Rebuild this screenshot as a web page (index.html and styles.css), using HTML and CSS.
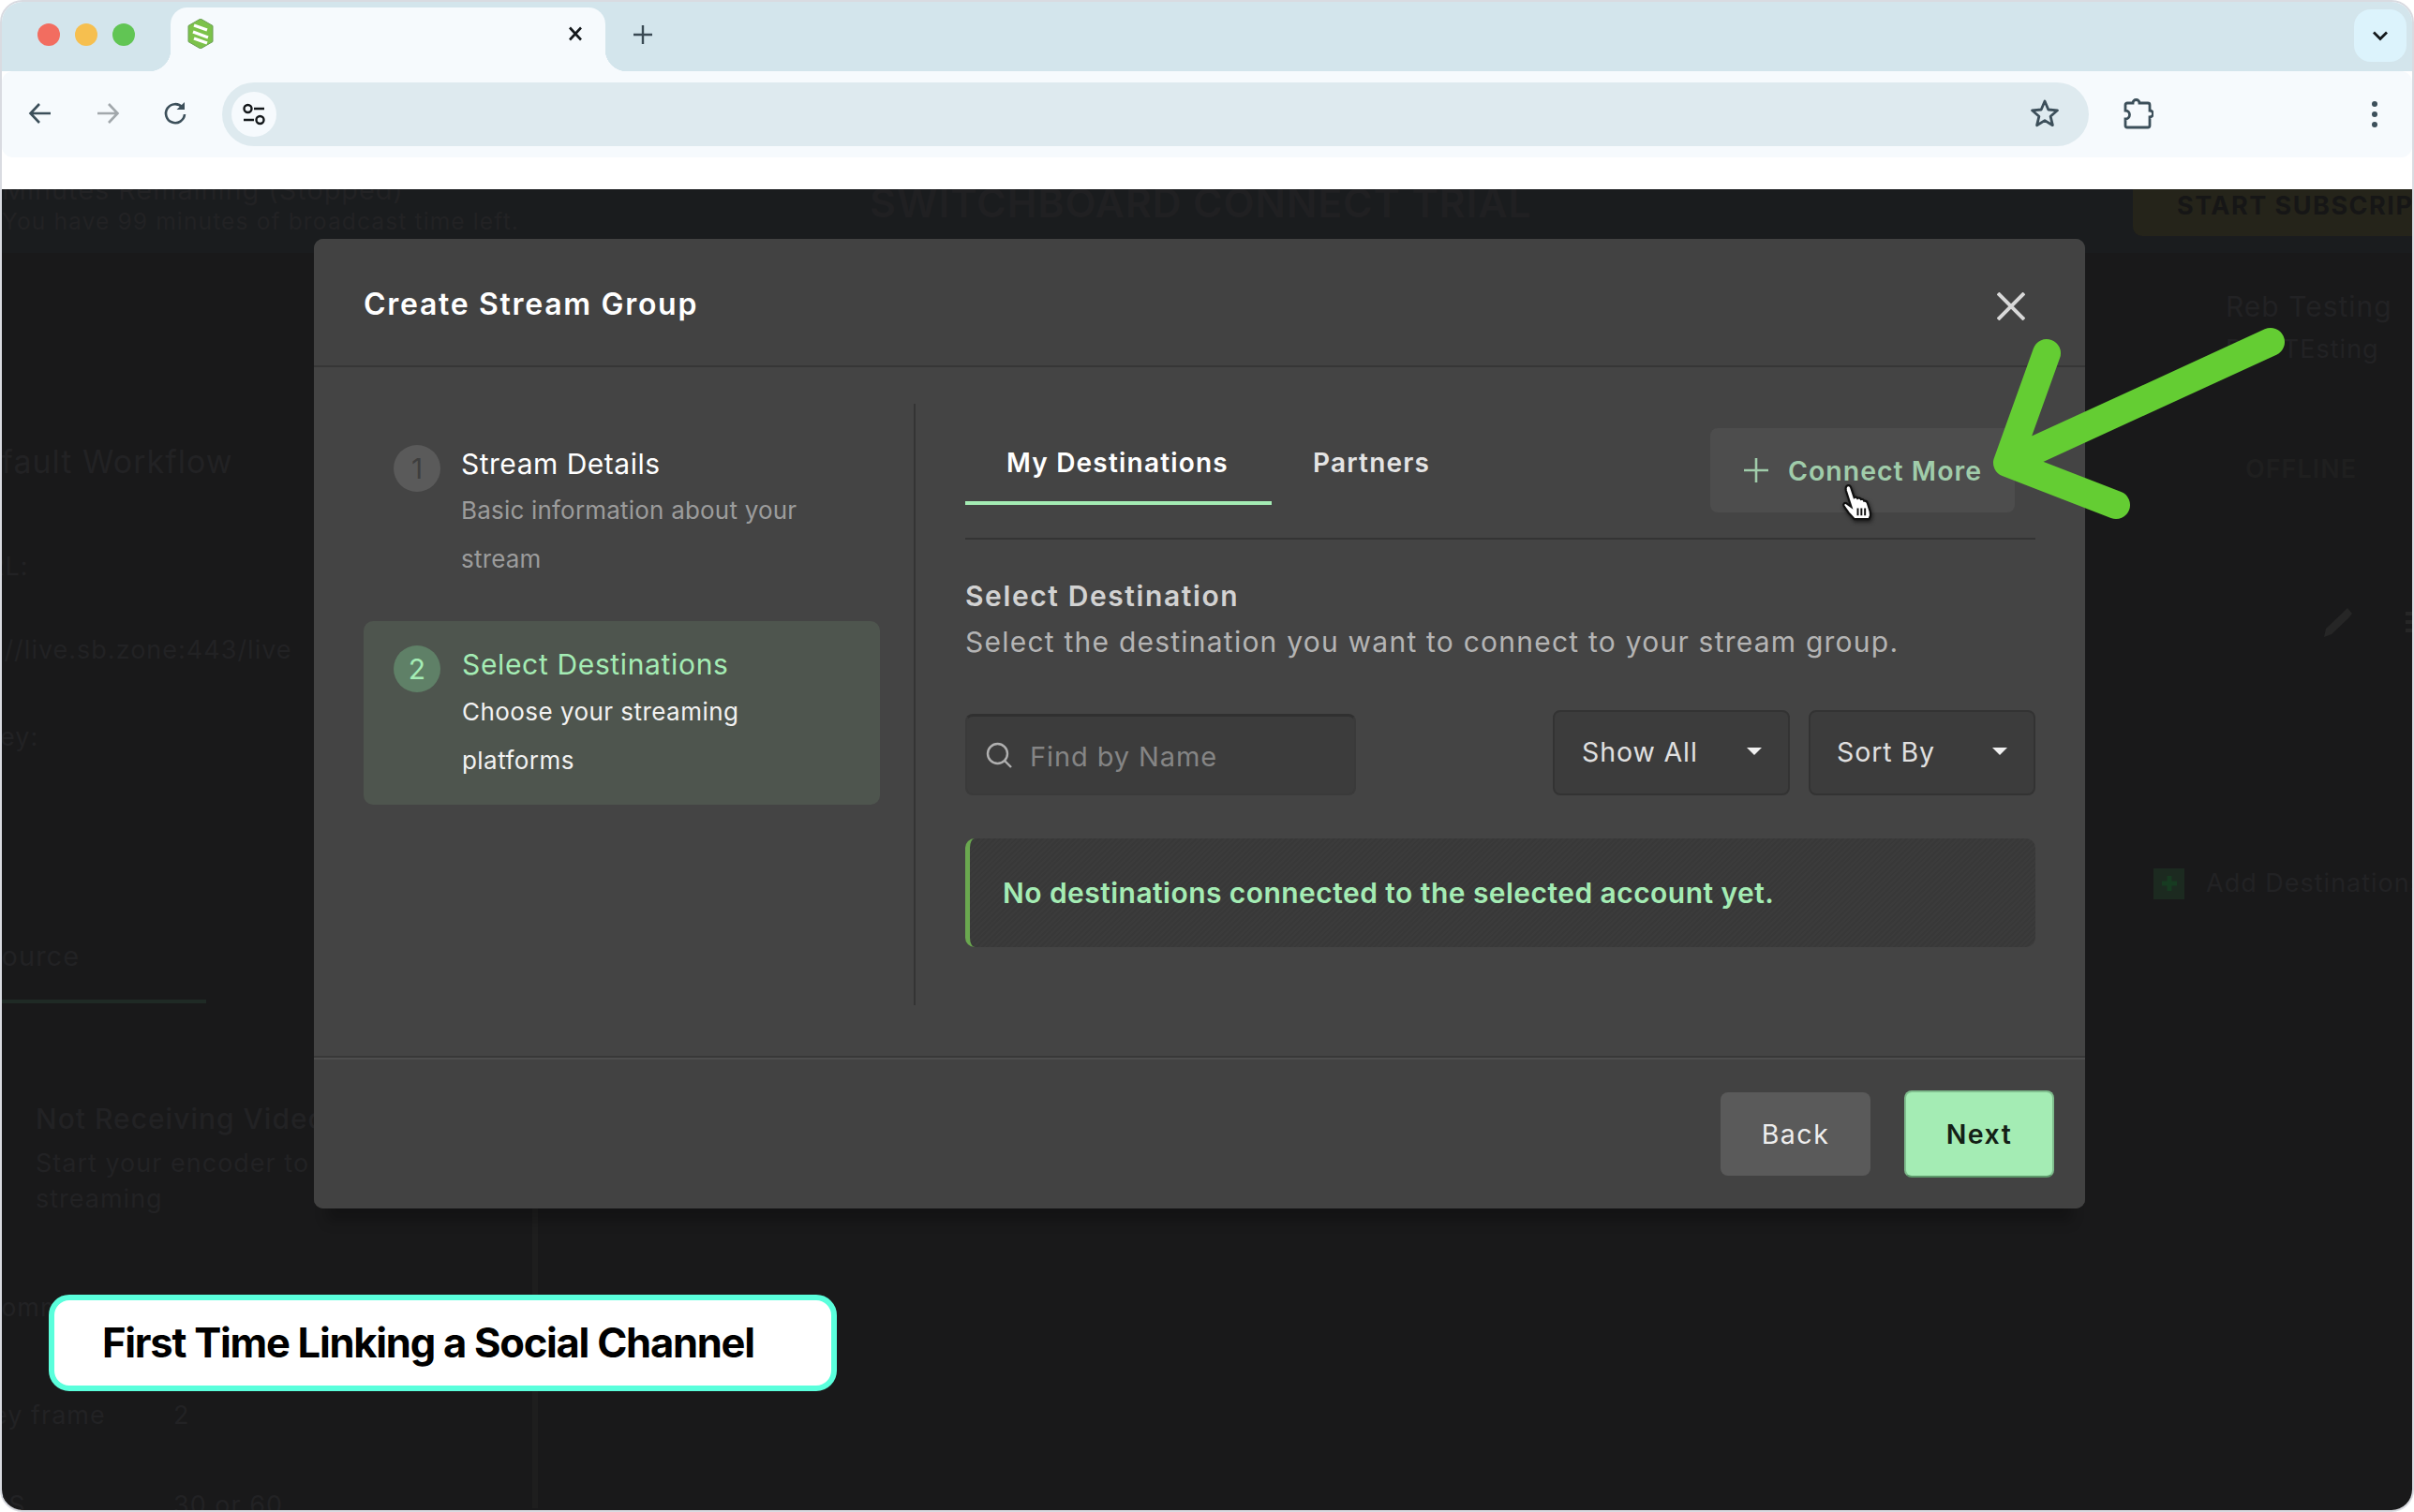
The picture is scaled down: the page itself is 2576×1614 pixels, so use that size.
FILE: index.html
```html
<!DOCTYPE html>
<html>
<head>
    <title>Create Stream Group</title>
    <link rel="stylesheet" href="styles.css">
</head>
<body>
<div class="window">
    <div class="tabstrip">
        <div class="lights">
            <span class="light red"></span>
            <span class="light yellow"></span>
            <span class="light green"></span>
        </div>
        <div class="tab">
            <svg class="favicon" viewBox="0 0 28 32">
                <path d="M14 0 27 7.500V24.500L14 32 1 24.500V7.500z" fill="#7cc24a" stroke="#6a9e55"/>
                <path d="M7 7 21 12M6 14 22 20M7 21 21 26" stroke="#fff" stroke-width="3.400" fill="none"/>
            </svg>
            <svg class="tab-close" viewBox="0 0 18 18"><path d="M3 2.500 15 15.500M15 2.500 3 15.500" stroke="#14181b" stroke-width="2.600" fill="none"/></svg>
        </div>
        <svg class="new-tab" viewBox="0 0 22 22"><path d="M11 1V21M1 11H21" stroke="#3a4a54" stroke-width="2.400" fill="none"/></svg>
        <div class="tab-search">
            <svg viewBox="0 0 18 12" width="18" height="12"><path d="M2 2.500 9 9.500 16 2.500" stroke="#14181b" stroke-width="2.800" fill="none"/></svg>
        </div>
    </div>
    <div class="toolbar">
        <svg class="nav-icon" viewBox="0 0 26 26"><path d="M24 13H3M12 3 2.500 13 12 23" stroke="#3c4f5a" stroke-width="2.600" fill="none"/></svg>
        <svg class="nav-icon" viewBox="0 0 26 26"><path d="M2 13H23M14 3 23.500 13 14 23" stroke="#a2a8ac" stroke-width="2.600" fill="none"/></svg>
        <svg class="nav-icon" viewBox="0 0 26 26"><path d="M20.500 6.500A10 10 0 1 0 23 14" stroke="#3c4f5a" stroke-width="2.600" fill="none"/><path d="M14.500 9H23V1z" fill="#3c4f5a"/></svg>
        <div class="omnibox">
            <div class="site-chip">
                <svg viewBox="0 0 26 26" width="26" height="26"><circle cx="6.500" cy="7" r="4" stroke="#14181b" stroke-width="2.400" fill="none"/><path d="M13 7H24M2 19H13" stroke="#14181b" stroke-width="2.600"/><circle cx="19.500" cy="19" r="4" stroke="#14181b" stroke-width="2.400" fill="none"/></svg>
            </div>
            <svg class="star" viewBox="0 0 32 32"><path d="M16 3 19.800 12 29.500 12.800 22.100 19.200 24.400 28.700 16 23.600 7.600 28.700 9.900 19.200 2.500 12.800 12.200 12z" stroke="#3c4f5a" stroke-width="2.800" fill="none" stroke-linejoin="round"/></svg>
        </div>
        <svg class="puzzle" viewBox="0 0 32 34"><path d="M4 6H10A3.500 3.500 0 0 1 17 6H26A2 2 0 0 1 28 8V14A3.500 3.500 0 0 1 28 21V30A2 2 0 0 1 26 32H4A2 2 0 0 1 2 30V23A4.500 4.500 0 0 0 2 14V8A2 2 0 0 1 4 6Z" stroke="#3c4f5a" stroke-width="2.800" fill="none"/></svg>
        <div class="kebab"><span></span><span></span><span></span></div>
    </div>
    <div class="toolbar-gap"></div>

    <div class="page">
        <div class="topbar">
            <div class="trial-info">
                <div class="trial-title">Minutes Remaining (Stopped)</div>
                <div class="trial-left">You have 99 minutes of broadcast time left.</div>
            </div>
            <div class="trial-name">SWITCHBOARD CONNECT TRIAL</div>
            <div class="subscribe">START SUBSCRIPTION</div>
        </div>
        <div class="page-main">
            <div class="left-col">
                <div class="ghost-row workflow">Default Workflow</div>
                <div class="ghost-row url-label">URL:</div>
                <div class="ghost-row url-value">rtmp://live.sb.zone:443/live</div>
                <div class="ghost-row key-label">Key:</div>
                <div class="ghost-row source-tab">Source</div>
                <div class="source-line"></div>
                <div class="ghost-row receive-title">Not Receiving Video</div>
                <div class="ghost-row receive-text">Start your encoder to begin</div>
                <div class="ghost-row receive-text2">streaming</div>
                <div class="ghost-row recommend">Recommended</div>
                <div class="ghost-row spec keyframe"><span class="spec-label">Key frame</span><span>2</span></div>
                <div class="ghost-row spec fps"><span class="spec-label">FPS</span><span>30 or 60</span></div>
            </div>
            <div class="right-col">
                <div class="ghost-row reb-name">Reb Testing</div>
                <div class="ghost-row reb-sub">Reb TEsting</div>
                <div class="ghost-row offline">OFFLINE</div>
                <div class="ghost-row edit-row">
                    <svg class="pencil" viewBox="0 0 32 33"><path d="M1 32 3 23 22 5 26 1 31 7 27 12 9 29z" fill="#262626"/></svg>
                    <div class="hamburger"><span></span><span></span><span></span></div>
                </div>
                <div class="ghost-row add-row">
                    <span class="add-box"><svg viewBox="0 0 20 20" width="20" height="20"><path d="M10 2V18M2 10H18" stroke="#173b21" stroke-width="5"/></svg></span>
                    <span>Add Destinations</span>
                </div>
            </div>
        </div>

        <!-- modal -->
        <div class="modal">
            <div class="modal-header">
                <h2>Create Stream Group</h2>
                <svg class="modal-close" viewBox="0 0 30 30"><path d="M1 1 29 29M29 1 1 29" stroke="#d8d8d8" stroke-width="4" fill="none"/></svg>
            </div>
            <div class="modal-body">
                <div class="steps">
                    <div class="step done">
                        <div class="step-num">1</div>
                        <div>
                            <div class="step-title">Stream Details</div>
                            <div class="step-desc">Basic information about your stream</div>
                        </div>
                    </div>
                    <div class="step active">
                        <div class="step-num">2</div>
                        <div>
                            <div class="step-title">Select Destinations</div>
                            <div class="step-desc">Choose your streaming platforms</div>
                        </div>
                    </div>
                </div>
                <div class="content">
                    <div class="tabs">
                        <a class="tab-link active">My Destinations</a>
                        <a class="tab-link">Partners</a>
                        <button class="connect">
                            <svg viewBox="0 0 28 28" width="28" height="28"><path d="M14 1V27M1 14H27" stroke="#a0ccaa" stroke-width="2.600"/></svg>
                            Connect More
                        </button>
                    </div>
                    <div class="section-title">Select Destination</div>
                    <div class="section-sub">Select the destination you want to connect to your stream group.</div>
                    <div class="filters">
                        <div class="search">
                            <svg viewBox="0 0 30 30" width="30" height="30"><circle cx="13.500" cy="13.500" r="10.500" stroke="#b0b0b0" stroke-width="2.400" fill="none"/><path d="M21 21 28 28" stroke="#b0b0b0" stroke-width="2.400"/></svg>
                            <span>Find by Name</span>
                        </div>
                        <div class="select show-all"><span>Show All</span><i class="caret"></i></div>
                        <div class="select sort-by"><span>Sort By</span><i class="caret"></i></div>
                    </div>
                    <div class="notice">No destinations connected to the selected account yet.</div>
                </div>
            </div>
            <div class="modal-footer">
                <button class="btn back">Back</button>
                <button class="btn next">Next</button>
            </div>
        </div>

        <svg class="hand" viewBox="0 0 32 36">
            <path d="M5 2.500C6.500 1 8.500 1.500 9.200 3.500L12.500 13.500C13.800 12.800 15 13.200 15.700 14.300 17 13.500 18.500 14 19.100 15.200 20.300 14.800 21.800 15.500 22.200 16.800 23.500 16.600 25 17.300 25.500 19L28 27C29 30 28.500 32 27 34.500H12.500C11 32.500 9 30.500 7 28.500L2.500 22C1.200 20 3 18 5 19.200L9.500 22.500 4.500 7C4 5 4 3.500 5 2.500Z" fill="#fff" stroke="#111" stroke-width="2"/>
            <path d="M16 24V31M19.500 24V31M23 24V31" stroke="#111" stroke-width="1.800"/>
        </svg>

        <svg class="arrow" viewBox="0 0 330 240">
            <path d="M310 38 29 167M71 50 29 167 145 212" stroke="#64cd33" stroke-width="30" stroke-linecap="round" stroke-linejoin="round" fill="none"/>
        </svg>

        <div class="caption">First Time Linking a Social Channel</div>
    </div>
</div>
</body>
</html>
```
FILE: styles.css
```css
* {
    box-sizing: border-box;
}
body {
    margin: 0;
    background-color: #fff;
    font-family: Inter, "Noto Sans", sans-serif;
    color: #fff;
}
.window {
    width: 2576px;
    height: 1614px;
    border: 2px solid #d9dbe1;
    border-radius: 24px;
    overflow: hidden;
    display: flex;
    flex-direction: column;
    background-color: #fff;
}

/* browser chrome */
.tabstrip {
    height: 74px;
    flex-shrink: 0;
    background-color: #d3e5ec;
    display: flex;
    align-items: flex-end;
    position: relative;
}
.lights {
    display: flex;
    gap: 16px;
    width: 180px;
    padding: 0 0 27px 38px;
}
.light {
    width: 24px;
    height: 24px;
    border-radius: 50%;
}
.light.red { background-color: #f26d60; }
.light.yellow { background-color: #f6bf4f; }
.light.green { background-color: #61c554; }
.tab {
    width: 464px;
    height: 68px;
    background-color: #f6fafd;
    border-radius: 18px 18px 0 0;
    display: flex;
    align-items: center;
    justify-content: space-between;
    padding: 0 23px 12px 18px;
    position: relative;
}
.tab::before,
.tab::after {
    content: "";
    position: absolute;
    bottom: 0;
    width: 23px;
    height: 23px;
}
.tab::before {
    left: -23px;
    background: radial-gradient(circle at 0 0, transparent 23px, #f6fafd 23.500px);
}
.tab::after {
    right: -23px;
    background: radial-gradient(circle at 100% 0, transparent 23px, #f6fafd 23.500px);
}
.favicon {
    width: 28px;
    height: 32px;
}
.tab-close {
    width: 18px;
    height: 18px;
}
.new-tab {
    width: 22px;
    height: 22px;
    margin: 0 0 28px 29px;
}
.tab-search {
    width: 56px;
    height: 56px;
    margin: 0 6px 10px auto;
    background-color: #dcf3fc;
    border-radius: 18px;
    display: flex;
    align-items: center;
    justify-content: center;
}
.toolbar {
    height: 92px;
    flex-shrink: 0;
    background-color: #f6fafd;
    border-radius: 12px;
    display: flex;
    align-items: center;
    padding-left: 28px;
}
.nav-icon {
    width: 26px;
    height: 26px;
    margin: -2px 46px 0 0;
}
.nav-icon:nth-child(3) {
    margin-right: 37px;
}
.omnibox {
    width: 1992px;
    height: 68px;
    background-color: #deeaef;
    border-radius: 34px;
    display: flex;
    align-items: center;
    justify-content: space-between;
    padding: 0 31px 0 10px;
}
.site-chip {
    width: 48px;
    height: 48px;
    border-radius: 50%;
    background-color: #f6fafd;
    display: flex;
    align-items: center;
    justify-content: center;
}
.star {
    width: 32px;
    height: 32px;
    margin-top: -2px;
}
.puzzle {
    width: 32px;
    height: 34px;
    margin: -3px 0 0 37px;
}
.kebab {
    display: flex;
    flex-direction: column;
    gap: 5px;
    margin-left: 233px;
}
.kebab span {
    width: 6px;
    height: 6px;
    border-radius: 50%;
    background-color: #3c4f5a;
}
.toolbar-gap {
    height: 34px;
    flex-shrink: 0;
}

/* page behind the modal */
.page {
    flex: 1;
    position: relative;
    overflow: hidden;
    background-color: #19191a;
    color: #222224;
}
.topbar {
    height: 68px;
    background-color: #1a1c1e;
    display: flex;
    align-items: flex-start;
}
.trial-info {
    width: 926px;
    flex-shrink: 0;
}
.trial-title {
    font-size: 28.800px;
    line-height: 34px;
    margin-top: -16px;
    letter-spacing: 1px;
}
.trial-left {
    font-size: 24.600px;
    line-height: 32px;
    letter-spacing: 1.100px;
}
.trial-name {
    font-size: 43px;
    font-weight: 600;
    line-height: 46px;
    margin-top: -9px;
    letter-spacing: 0.800px;
    white-space: nowrap;
    color: #202022;
}
.subscribe {
    position: absolute;
    left: 2274px;
    top: -20px;
    width: 420px;
    height: 70px;
    padding: 20px 0 0 47px;
    background-color: #25241a;
    border-radius: 10px;
    font-size: 27px;
    line-height: 36px;
    font-weight: 700;
    letter-spacing: 1.500px;
    color: #161616;
    white-space: nowrap;
}
.page-main {
    display: flex;
    height: 1340px;
}
.left-col {
    width: 572px;
    flex-shrink: 0;
    border-right: 6px solid #1e1e1e;
}
.ghost-row {
    height: 40px;
    line-height: 40px;
    font-size: 27px;
    letter-spacing: 1px;
    white-space: nowrap;
}
.workflow {
    margin: 203px 0 0 -47px;
    font-size: 34px;
}
.url-label { margin: 72px 0 0 -36px; }
.url-value { margin: 49px 0 0 -70px; }
.key-label { margin: 53px 0 0 -20px; }
.source-tab { margin: 194px 0 0 -20px; font-size: 29px; }
.source-line {
    width: 218px;
    height: 4px;
    margin-top: 26px;
    background-color: #1f2a25;
}
.receive-title { margin: 103px 0 0 36px; font-size: 30px; font-weight: 500; }
.receive-text { margin: 8px 0 0 36px; }
.receive-text2 { margin: -2px 0 0 36px; }
.recommend { margin: 76px 0 0 -52px; }
.spec { display: flex; margin-left: -28px; }
.spec-label { width: 211px; }
.keyframe { margin-top: 75px; }
.fps { margin-top: 56px; }
.right-col {
    margin-left: auto;
    width: 278px;
    flex-shrink: 0;
}
.reb-name { margin: 37px 0 0 79px; font-size: 30px; }
.reb-sub { margin: 6px 0 0 79px; font-size: 27px; }
.offline { margin: 88px 0 0 100px; font-weight: 600; color: #1f1f1f; }
.edit-row {
    display: flex;
    align-items: center;
    margin: 123px 0 0 183px;
    gap: 56px;
}
.pencil {
    width: 32px;
    height: 33px;
    flex-shrink: 0;
}
.hamburger {
    display: flex;
    flex-direction: column;
    gap: 5px;
}
.hamburger span {
    width: 20px;
    height: 4px;
    background-color: #262626;
}
.add-row {
    display: flex;
    align-items: center;
    gap: 23px;
    margin: 239px 0 0 2px;
    width: 400px;
}
.add-box {
    width: 33px;
    height: 33px;
    background-color: #1c2a20;
    display: flex;
    align-items: center;
    justify-content: center;
}

/* modal */
.modal {
    position: absolute;
    left: 333px;
    top: 53px;
    width: 1890px;
    height: 1035px;
    background-color: #444;
    border-radius: 10px;
    box-shadow: 0 28px 12px -14px rgba(0, 0, 0, 0.22);
    color: #fff;
    display: flex;
    flex-direction: column;
}
.modal-header {
    height: 137px;
    flex-shrink: 0;
    display: flex;
    align-items: center;
    justify-content: space-between;
    padding: 0 64px 0 53px;
    background-color: #424242;
    border-radius: 10px 10px 0 0;
    border-bottom: 2px solid #363636;
}
.modal-header h2 {
    margin: 3px 0 0 0;
    font-size: 32px;
    font-weight: 600;
    letter-spacing: 1.700px;
}
.modal-close {
    width: 30px;
    height: 30px;
    margin-top: 8px;
}
.modal-body {
    flex: 1;
    display: flex;
    padding: 39px 53px 0 53px;
}
.steps {
    width: 589px;
    height: 642px;
    flex-shrink: 0;
    padding: 18px 36px 0 0;
    border-right: 2px solid #343434;
}
.step {
    display: flex;
    gap: 23px;
    height: 196px;
    padding: 26px 0 0 32px;
    border-radius: 10px;
    margin-bottom: 18px;
}
.step.done {
    gap: 22px;
}
.step.active {
    background-color: #4e554e;
}
.step-num {
    width: 50px;
    height: 50px;
    flex-shrink: 0;
    border-radius: 50%;
    background-color: #5a5a5a;
    color: #3e3e3e;
    font-size: 30px;
    line-height: 50px;
    text-align: center;
}
.active .step-num {
    background-color: #5f8067;
    color: #a4ecb4;
}
.step-title {
    font-size: 30px;
    line-height: 40px;
    letter-spacing: 0.500px;
}
.active .step-title {
    color: #a4ecb4;
    letter-spacing: 0.650px;
}
.step-desc {
    font-size: 26px;
    line-height: 52px;
    margin-top: 4px;
    letter-spacing: 0.200px;
    color: #9c9c9c;
    width: 400px;
}
.active .step-desc {
    margin-top: 5px;
    letter-spacing: 0.450px;
    color: #f2f2f2;
}
.content {
    flex: 1;
    margin-left: 53px;
}
.tabs {
    height: 145px;
    display: flex;
    align-items: flex-start;
    border-bottom: 2px solid #343434;
}
.tab-link {
    padding: 43px 44px 21px 44px;
    font-size: 28px;
    line-height: 40px;
    font-weight: 600;
    letter-spacing: 1.200px;
    color: #e4e4e4;
}
.tab-link.active {
    padding-right: 46px;
    border-bottom: 4px solid #a4ecb4;
    color: #fff;
}
.connect {
    margin: 26px 22px 0 auto;
    width: 325px;
    height: 90px;
    background-color: #4d4d4d;
    border: none;
    border-radius: 8px;
    display: flex;
    align-items: center;
    justify-content: center;
    gap: 20px;
    font-family: inherit;
    font-size: 28.500px;
    font-weight: 600;
    letter-spacing: 1px;
    color: #a0ccaa;
}
.section-title {
    margin-top: 40px;
    font-size: 30px;
    line-height: 40px;
    font-weight: 600;
    letter-spacing: 1.600px;
    color: #d2d2d2;
}
.section-sub {
    margin-top: 9px;
    font-size: 30px;
    line-height: 40px;
    letter-spacing: 1.230px;
    color: #b4b4b4;
}
.filters {
    margin-top: 53px;
    height: 91px;
    display: flex;
    align-items: flex-end;
    gap: 20px;
}
.search {
    width: 417px;
    height: 87px;
    margin-right: auto;
    background-color: #3c3c3c;
    border-radius: 8px;
    border: 2px solid #3a3a3a;
    border-top: 3px solid #303030;
    display: flex;
    align-items: center;
    gap: 18px;
    padding-left: 19px;
    font-size: 29px;
    letter-spacing: 0.900px;
    color: #858585;
}
.search span {
    margin-top: 2px;
}
.select {
    height: 91px;
    background-color: #3c3c3c;
    border: 2px solid #333;
    border-radius: 8px;
    display: flex;
    align-items: center;
    justify-content: space-between;
    font-size: 28.500px;
    letter-spacing: 0.900px;
    color: #e0e0e0;
    padding-bottom: 3px;
}
.show-all {
    width: 253px;
    padding-left: 29px;
    padding-right: 28px;
}
.sort-by {
    width: 242px;
    padding-left: 28px;
    padding-right: 28px;
}
.caret {
    border-left: 8px solid transparent;
    border-right: 8px solid transparent;
    border-top: 8px solid #f0f0f0;
}
.notice {
    margin-top: 46px;
    width: 1142px;
    height: 116px;
    padding-left: 35px;
    display: flex;
    align-items: center;
    background: repeating-linear-gradient(135deg, #3b3b3b 0, #3b3b3b 2px, #383838 2px, #383838 4px);
    border-left: 5px solid #6aa84f;
    border-radius: 10px;
    font-size: 30px;
    font-weight: 600;
    letter-spacing: 0.450px;
    color: #a4ecb4;
}
.modal-footer {
    height: 163px;
    flex-shrink: 0;
    display: flex;
    align-items: center;
    justify-content: flex-end;
    gap: 36px;
    padding: 2px 33px 0 0;
    border-top: 2px solid #383838;
    box-shadow: inset 0 2px 0 #4e4e4e;
    background-color: #424242;
    border-radius: 0 0 10px 10px;
}
.btn {
    width: 160px;
    border: none;
    border-radius: 8px;
    font-family: inherit;
    font-size: 28.500px;
    letter-spacing: 1.500px;
}
.back {
    height: 89px;
    background-color: #5a5a5a;
    color: #eee;
}
.next {
    height: 93px;
    background-color: #a4ecb4;
    border: 2px solid #7fbd8d;
    border-bottom-color: #5d9a6b;
    font-weight: 600;
    color: #142016;
}

/* things laid over the recording */
.hand {
    position: absolute;
    left: 1963px;
    top: 314px;
    width: 35px;
    height: 40px;
    filter: drop-shadow(1px 2px 2px rgba(0, 0, 0, 0.6));
}
.arrow {
    position: absolute;
    left: 2111px;
    top: 125px;
    width: 330px;
    height: 240px;
}
.caption {
    position: absolute;
    left: 50px;
    top: 1180px;
    width: 841px;
    height: 103px;
    padding: 0 0 2px 51px;
    display: flex;
    align-items: center;
    background-color: #fff;
    border: 6px solid #5affdc;
    border-radius: 22px;
    font-size: 43.500px;
    font-weight: 700;
    letter-spacing: -1.250px;
    color: #000;
}
```
